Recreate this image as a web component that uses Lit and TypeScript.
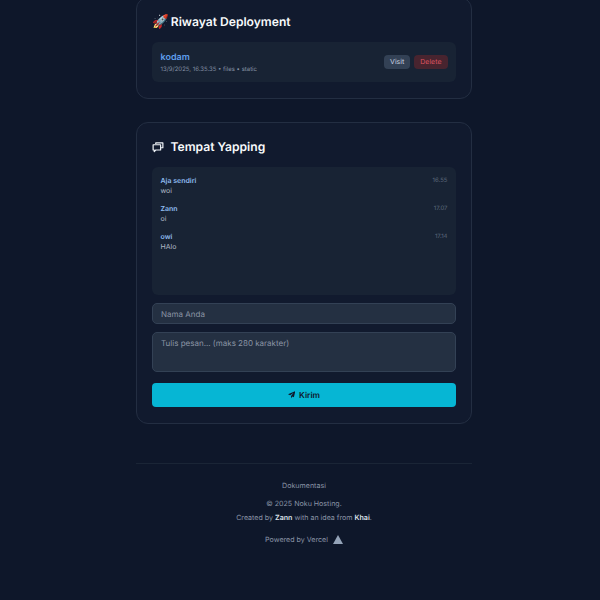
import { LitElement, html, css } from "lit";
import { customElement } from "lit/decorators.js";

const messages = [
  { name: "Aja sendiri", text: "woi", time: "16.55" },
  { name: "Zann", text: "oi", time: "17.07" },
  { name: "owi", text: "HAlo", time: "17.14" },
];

@customElement("app-root")
export class AppRoot extends LitElement {
  static styles = css`
    :host {
      display: block;
      height: 600px;
      overflow: hidden;
      background: #0e172a;
      font-family: Inter, "Noto Sans", sans-serif;
      color: #e2e8f0;
      text-rendering: geometricPrecision;
    }
    .page {
      width: 336px;
      margin: -3px 128px 0 136px;
      display: flex;
      flex-direction: column;
      gap: 23px;
    }
    .card {
      box-sizing: border-box;
      background: #111a2e;
      border: 1px solid #232e42;
      border-radius: 12px;
      padding: 15px 15.5px 16px 15px;
      display: flex;
      flex-direction: column;
    }
    h2 {
      margin: 0;
      font-size: 12.1px;
      line-height: 18px;
      font-weight: 600;
      color: #f8fafc;
      display: flex;
      align-items: center;
    }
    .rocket { font-size: 13.5px; margin-right: 2px; }
    .chat-icon { width: 12px; height: 12px; margin-right: 6.5px; color: #f1f5f9; }
    .history { margin-top: 11px; }
    .deploy {
      background: #182334;
      border-radius: 6px;
      padding: 8px 8px 8px 8.5px;
      height: 40px;
      box-sizing: border-box;
      display: flex;
      align-items: center;
      justify-content: space-between;
    }
    .name { font-size: 9px; line-height: 13px; font-weight: 600; color: #5f9fee; margin-top: 1px; }
    .meta { font-size: 6px; line-height: 9px; color: #8390a3; margin-top: 1px; }
    .actions { display: flex; gap: 4px; }
    .btn {
      font-size: 7px;
      line-height: 14px;
      padding: 0 6px;
      border-radius: 4px;
    }
    .visit { background: #334155; color: #cbd5e1; }
    .delete { background: #48242f; color: #d9525f; }
    .chat {
      margin-top: 11px;
      background: #182334;
      border-radius: 6px;
      height: 128px;
      box-sizing: border-box;
      padding: 9px 8px 8px 8.5px;
      display: flex;
      flex-direction: column;
      gap: 8px;
    }
    .msg-head { display: flex; justify-content: space-between; align-items: center; }
    .author { font-size: 7px; line-height: 10px; font-weight: 600; color: #8fbcf0; }
    .time { font-size: 6px; line-height: 10px; color: #5f6b7e; }
    .msg-text { font-size: 7px; line-height: 10px; color: #aeb8c5; }
    .field {
      box-sizing: border-box;
      background: #243042;
      border: 1px solid #334155;
      border-radius: 5px;
      color: #8b95a5;
      font-size: 8px;
      padding: 0 8px;
    }
    .input { margin-top: 8px; height: 21px; display: flex; align-items: center; }
    .textarea { margin-top: 8px; height: 40px; padding-top: 4px; line-height: 12px; }
    .send {
      margin-top: 11px;
      height: 24px;
      border-radius: 4px;
      background: #06b6d4;
      color: #0f172a;
      font-size: 8.25px;
      font-weight: 600;
      display: flex;
      align-items: center;
      justify-content: center;
      gap: 4px;
    }
    .send svg { width: 7.5px; height: 7.5px; }
    footer {
      margin-top: 16px;
      border-top: 1px solid #1a2536;
      padding-top: 16px;
      display: flex;
      flex-direction: column;
      align-items: center;
      color: #8a94a6;
      font-size: 7.1px;
      line-height: 11px;
    }
    .copy { margin-top: 7px; }
    .credit { margin-top: 3px; }
    b { color: #dde3ec; font-weight: 600; }
    .powered { margin-top: 11px; display: flex; align-items: center; gap: 5px; }
    .powered svg { width: 10px; height: 9px; }
  `;

  render() {
    return html`
      <div class="page">
        <section class="card">
          <h2><span class="rocket">🚀</span>Riwayat Deployment</h2>
          <div class="history">
            <div class="deploy">
              <div>
                <div class="name">kodam</div>
                <div class="meta">13/9/2025, 16.35.35 • files • static</div>
              </div>
              <div class="actions">
                <span class="btn visit">Visit</span>
                <span class="btn delete">Delete</span>
              </div>
            </div>
          </div>
        </section>
        <section class="card">
          <h2>
            <svg class="chat-icon" viewBox="0 0 16 16" fill="none" stroke="currentColor" stroke-width="1.6" stroke-linejoin="round">
              <path d="M5 4V2.5h9.5V9H12" />
              <path d="M1.5 5h10v7H5l-2 2v-2H1.5z" />
            </svg>
            Tempat Yapping
          </h2>
          <div class="chat">
            ${messages.map(
              (m) => html`
                <div>
                  <div class="msg-head">
                    <span class="author">${m.name}</span>
                    <span class="time">${m.time}</span>
                  </div>
                  <div class="msg-text">${m.text}</div>
                </div>
              `
            )}
          </div>
          <div class="field input">Nama Anda</div>
          <div class="field textarea">Tulis pesan... (maks 280 karakter)</div>
          <div class="send">
            <svg viewBox="0 0 16 16" fill="currentColor"><path d="M15.5.5 0 7l4.5 2.2L12 3.5 6.5 10.5V15.5l2.8-3.6 3.2 1.6z" /></svg>
            Kirim
          </div>
        </section>
        <footer>
          <div>Dokumentasi</div>
          <div class="copy">© 2025 Noku Hosting.</div>
          <div class="credit">Created by <b>Zann</b> with an idea from <b>Khai</b>.</div>
          <div class="powered">
            Powered by Vercel
            <svg viewBox="0 0 10 9" fill="#94a3b8"><path d="M5 0l5 9H0z" /></svg>
          </div>
        </footer>
      </div>
    `;
  }
}
